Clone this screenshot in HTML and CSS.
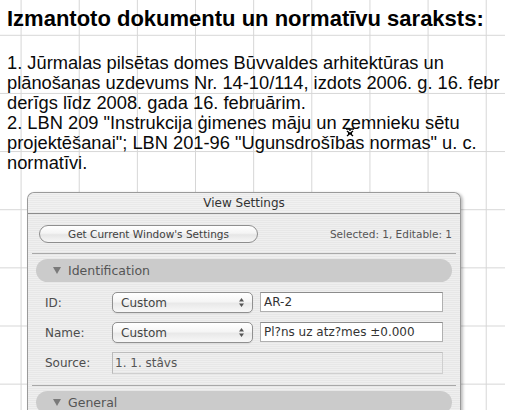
FILE: index.html
```html
<!DOCTYPE html>
<html lang="lv">
<head>
<meta charset="utf-8">
<title>Izmantoto dokumentu un normatīvu saraksts</title>
<link rel="stylesheet" href="styles.css">
</head>
<body>
<div class="page">
  <h1 class="title">Izmantoto dokumentu un normatīvu saraksts:</h1>
  <div class="list">
    <div class="line">1. Jūrmalas pilsētas domes Būvvaldes arhitektūras un</div>
    <div class="line">plānošanas uzdevums Nr. 14-10/114, izdots 2006. g. 16. febr</div>
    <div class="line">derīgs līdz 2008. gada 16. februārim.</div>
    <div class="line">2. LBN 209 "Instrukcija ģimenes māju un zemnieku sētu</div>
    <div class="line">projektēšanai"; LBN 201-96 "Ugunsdrošības normas" u. c.</div>
    <div class="line">normatīvi.</div>
    <svg class="cursor" width="10" height="9" viewBox="0 0 10 9"><path d="M1 1h8M5 1v2M2 3l6 5M8 3l-6 5M3 5.5h4" stroke="#000" stroke-width="1.4" fill="none"/></svg>
  </div>
  <div class="window">
    <div class="titlebar">View Settings</div>
    <div class="content">
      <div class="toprow">
        <div class="btn">Get Current Window's Settings</div>
        <div class="status">Selected: 1, Editable: 1</div>
      </div>
      <div class="sep"></div>
      <div class="group"><span class="tri"></span>Identification</div>
      <div class="form">
        <div class="label">ID:</div>
        <div class="popup"><span>Custom</span><svg class="arrows" width="7" height="11" viewBox="0 0 7 11"><path d="M3.5 1L6 4.5H1zM3.5 10L6 6.5H1z" fill="#555"/></svg></div>
        <div class="field">AR-2</div>
        <div class="label">Name:</div>
        <div class="popup"><span>Custom</span><svg class="arrows" width="7" height="11" viewBox="0 0 7 11"><path d="M3.5 1L6 4.5H1zM3.5 10L6 6.5H1z" fill="#555"/></svg></div>
        <div class="field">Pl?ns uz atz?mes ±0.000</div>
        <div class="label">Source:</div>
        <div class="source">1. 1. stâvs</div>
      </div>
      <div class="sep sep2"></div>
      <div class="group"><span class="tri"></span>General</div>
    </div>
  </div>
</div>
</body>
</html>
```
FILE: styles.css
```css
html, body {
  margin: 0;
  padding: 0;
  width: 505px;
  height: 410px;
  overflow: hidden;
}
body {
  background-color: #ffffff;
  background-image:
    linear-gradient(to right, #d6d6d6 1px, transparent 1px),
    linear-gradient(to bottom, #d6d6d6 1px, transparent 1px);
  background-size: 58.15px 58.15px;
  background-position: 20.6px 34.8px;
  font-family: "Liberation Sans", Arial, sans-serif;
  color: #000;
}
.page {
  padding: 6px 0 0 7px;
}
.title {
  margin: 0;
  font: 700 22px/26px "Liberation Sans", Arial, sans-serif;
  white-space: nowrap;
}
.list {
  position: relative;
  margin-top: 21px;
  font-size: 18.3px;
  line-height: 20px;
  color: #0a0a0a;
}
.line {
  white-space: nowrap;
}
.cursor {
  position: absolute;
  left: 338px;
  top: 75px;
}
.window {
  margin: 19px 0 0 20px;
  width: 432px;
  height: 240px;
  border: 1px solid #9a9a9a;
  border-bottom: none;
  border-radius: 7px 7px 0 0;
  background: repeating-linear-gradient(to bottom, #efefef 0, #efefef 1px, #e7e7e7 1px, #e7e7e7 2px);
  box-shadow: 2px 1px 3px rgba(0,0,0,0.25);
  font-family: "DejaVu Sans", Verdana, sans-serif;
  color: #444;
}
.titlebar {
  height: 20px;
  line-height: 20px;
  text-align: center;
  font-size: 12px;
  color: #333;
  border-bottom: 1px solid #8c8c8c;
  border-radius: 7px 7px 0 0;
  background: repeating-linear-gradient(to bottom, #f1f1f1 0, #f1f1f1 1px, #e9e9e9 1px, #e9e9e9 2px);
}
.content {
  padding: 0 4px;
}
.toprow {
  margin: 11px 4px 0 7px;
  height: 18px;
  display: flex;
  align-items: center;
  justify-content: space-between;
}
.btn {
  box-sizing: border-box;
  width: 219px;
  height: 18px;
  border: 1px solid #8e8e8e;
  border-radius: 9px;
  background: linear-gradient(to bottom, #ffffff 0%, #f4f4f4 45%, #e6e6e6 55%, #f6f6f6 100%);
  font-size: 10.5px;
  line-height: 16px;
  text-align: center;
  color: #404040;
}
.status {
  font-size: 10.5px;
  color: #555;
}
.sep {
  margin-top: 10px;
  height: 1px;
  background: #a8a8a8;
}
.sep2 {
  margin-top: 12px;
}
.group {
  margin: 5px 4px 0 4px;
  height: 23px;
  border-radius: 12px;
  background: #cbcbcb;
  display: flex;
  align-items: center;
  padding-left: 17px;
  font-size: 12.5px;
  color: #555;
}
.tri {
  width: 0;
  height: 0;
  border-left: 4px solid transparent;
  border-right: 4px solid transparent;
  border-top: 7px solid #7a7a7a;
  margin-right: 7px;
}
.form {
  margin-top: 10px;
  padding-left: 13px;
  display: grid;
  grid-template-columns: 60px 141px 183px;
  grid-auto-rows: 21px;
  column-gap: 7px;
  row-gap: 9px;
  font-size: 12px;
}
.label {
  display: flex;
  align-items: center;
  color: #4d4d4d;
}
.popup {
  box-sizing: border-box;
  display: flex;
  align-items: center;
  justify-content: space-between;
  padding: 0 7px 0 8px;
  border: 1px solid #909090;
  border-radius: 5px;
  background: linear-gradient(to bottom, #ffffff 0%, #f5f5f5 45%, #e9e9e9 55%, #f7f7f7 100%);
  color: #444;
  box-shadow: 0 1px 1px rgba(0,0,0,0.08);
}
.field {
  box-sizing: border-box;
  display: flex;
  align-items: center;
  padding-left: 3px;
  background: #ffffff;
  border: 1px solid #b0b0b0;
  border-top-color: #8c8c8c;
  color: #333;
  height: 20px;
}
.source {
  grid-column: 2 / 4;
  box-sizing: border-box;
  height: 22px;
  display: flex;
  align-items: center;
  padding-left: 2px;
  border: 1px solid #cfcfcf;
  border-left-color: #b9b9b9;
  border-top-color: #bdbdbd;
  color: #555;
}
```
